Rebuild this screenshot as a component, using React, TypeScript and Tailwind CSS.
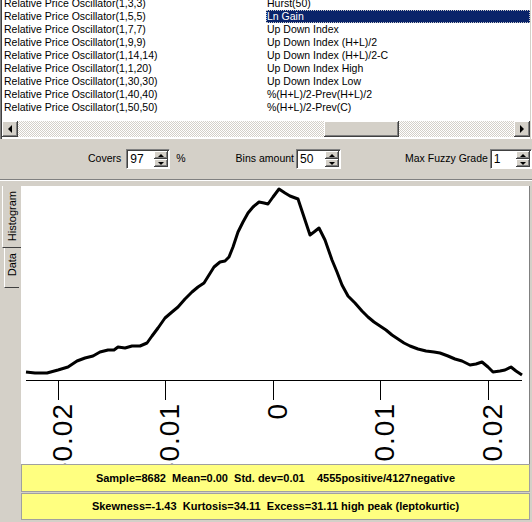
import React from 'react';

const leftItems = [
  'Relative Price Oscillator(1,3,3)',
  'Relative Price Oscillator(1,5,5)',
  'Relative Price Oscillator(1,7,7)',
  'Relative Price Oscillator(1,9,9)',
  'Relative Price Oscillator(1,14,14)',
  'Relative Price Oscillator(1,1,20)',
  'Relative Price Oscillator(1,30,30)',
  'Relative Price Oscillator(1,40,40)',
  'Relative Price Oscillator(1,50,50)',
];

const rightItems = [
  'Hurst(50)',
  'Ln Gain',
  'Up Down Index',
  'Up Down Index (H+L)/2',
  'Up Down Index (H+L)/2-C',
  'Up Down Index High',
  'Up Down Index Low',
  '%(H+L)/2-Prev(H+L)/2',
  '%(H+L)/2-Prev(C)',
];

// histogram outline, page coordinates
const curve = [
  [26, 372], [35, 373], [47, 373], [58, 370], [68, 367], [77, 361], [85, 358], [93, 356],
  [100, 352], [108, 350], [114, 350], [118, 347], [125, 348], [132, 346], [140, 346], [147, 343],
  [152, 336], [158, 328], [165, 318], [172, 312], [178, 307], [185, 299], [192, 292], [198, 287],
  [204, 283], [209, 275], [214, 267], [220, 262], [225, 261], [229, 257], [233, 247], [238, 232],
  [243, 222], [248, 213], [253, 207], [259, 202], [264, 203], [268, 204], [273, 197], [279, 189],
  [285, 193], [290, 196], [298, 199], [304, 217], [310, 235], [314, 232], [319, 228], [325, 240],
  [332, 260], [337, 272], [342, 285], [348, 296], [355, 303], [362, 311], [368, 317], [374, 322],
  [380, 326], [386, 330], [392, 335], [398, 339], [404, 343], [410, 346], [418, 349], [426, 351],
  [434, 352], [440, 353], [448, 356], [455, 359], [462, 361], [470, 365], [476, 364], [482, 362],
  [488, 367], [493, 372], [500, 371], [505, 370], [511, 367], [516, 371], [522, 375],
];

const ticks = [
  { x: 58, label: '-0.02' },
  { x: 165, label: '-0.01' },
  { x: 273, label: '0' },
  { x: 380, label: '0.01' },
  { x: 488, label: '0.02' },
];

function Arrow({ dir }: { dir: 'left' | 'right' | 'up' | 'down' }) {
  const pts = {
    left: '4,0 4,8 0,4',
    right: '0,0 0,8 4,4',
    up: '0,3 6,3 3,0',
    down: '0,0 6,0 3,3',
  }[dir];
  const big = dir === 'left' || dir === 'right';
  return (
    <svg width={big ? 4 : 6} height={big ? 8 : 3} viewBox={big ? '0 0 4 8' : '0 0 6 3'}>
      <polygon points={pts} fill="#000" />
    </svg>
  );
}

function RaisedButton({ children, className }: { children: React.ReactNode; className: string }) {
  return (
    <div
      className={`${className} bg-[#d4d0c8] flex items-center justify-center shadow-[inset_-1px_-1px_0_#404040,inset_1px_1px_0_#ffffff,inset_-2px_-2px_0_#808080]`}
    >
      {children}
    </div>
  );
}

function Spin({ value, width }: { value: string; width: string }) {
  return (
    <div className={`${width} h-[20px] flex bg-white border border-[#808080] border-b-white border-r-white shadow-[inset_1px_1px_0_#404040]`}>
      <span className="flex-1 pl-[3px] pt-[2px] text-[12px] leading-[14px] text-black">{value}</span>
      <div className="w-[15px] flex flex-col py-[1px] pr-[1px]">
        <RaisedButton className="flex-1">
          <Arrow dir="up" />
        </RaisedButton>
        <RaisedButton className="flex-1">
          <Arrow dir="down" />
        </RaisedButton>
      </div>
    </div>
  );
}

export default function App() {
  return (
    <div className="w-[532px] h-[522px] overflow-hidden bg-[#d4d0c8] font-['Liberation_Sans',Arial,sans-serif] text-black">
      {/* list box */}
      <div className="h-[139px] flex flex-col bg-white pl-[2px] pr-[2px] shadow-[inset_1px_0_0_#808080,inset_2px_0_0_#404040,inset_-1px_0_0_#ffffff,inset_-2px_0_0_#d4d0c8]">
        <div className="h-[121px] overflow-hidden">
          <div className="-mt-[3px] grid grid-cols-[264px_1fr] text-[10.5px] leading-[13px]">
            <div className="flex flex-col">
              {leftItems.map((t) => (
                <div key={t} className="h-[13px] pl-[2px] whitespace-nowrap">
                  {t}
                </div>
              ))}
            </div>
            <div className="flex flex-col">
              {rightItems.map((t) => (
                <div
                  key={t}
                  className={
                    t === 'Ln Gain'
                      ? 'h-[13px] pl-[1px] whitespace-nowrap bg-[#0a246a] text-white outline outline-1 outline-dotted outline-[#c8c8c8] -outline-offset-1'
                      : 'h-[13px] pl-[1px] whitespace-nowrap'
                  }
                >
                  {t}
                </div>
              ))}
            </div>
          </div>
        </div>
        <div className="h-[16px] flex">
          <RaisedButton className="w-[16px] h-[16px]">
            <Arrow dir="left" />
          </RaisedButton>
          <div className="flex-1 flex pl-[306px] bg-[repeating-conic-gradient(#d4d0c8_0_25%,#ffffff_0_50%)] bg-[length:2px_2px]">
            <RaisedButton className="w-[75px] h-[16px]">
              <span />
            </RaisedButton>
          </div>
          <RaisedButton className="w-[16px] h-[16px]">
            <Arrow dir="right" />
          </RaisedButton>
        </div>
        <div className="h-[2px] border-b border-white" />
      </div>

      {/* settings row */}
      <div className="h-[40px] flex items-center text-[10.5px] pl-[88px]">
        <span>Covers</span>
        <div className="ml-[5px]">
          <Spin value="97" width="w-[44px]" />
        </div>
        <span className="ml-[6px]">%</span>
        <span className="ml-[50px]">Bins amount</span>
        <div className="ml-[2px]">
          <Spin value="50" width="w-[45px]" />
        </div>
        <span className="ml-[64px]">Max Fuzzy Grade</span>
        <div className="ml-[2px]">
          <Spin value="1" width="w-[42px]" />
        </div>
      </div>
      <div className="h-[2px] border-t border-[#808080] border-b border-b-white" />
      <div className="h-[5px]" />

      {/* histogram pane */}
      <div className="h-[336px] flex">
        <div className="w-[21px] flex flex-col text-[11px]">
          <div className="ml-[2px] w-[19px] h-[62px] flex items-center justify-center border-l border-white border-b border-b-[#404040]">
            <span className="[writing-mode:vertical-rl] rotate-180">Histogram</span>
          </div>
          <div className="ml-[4px] w-[15px] h-[40px] flex items-start justify-center pt-[5px] border-l border-white border-b border-b-[#404040]">
            <span className="[writing-mode:vertical-rl] rotate-180">Data</span>
          </div>
        </div>
        <div className="flex-1 flex flex-col pr-[2px]">
          <div className="h-[278px] bg-white border-r border-[#808080] overflow-hidden">
            <svg width="508" height="278" viewBox="21 186 508 278">
              <polyline
                points={curve.map((p) => p.join(',')).join(' ')}
                fill="none"
                stroke="#000"
                strokeWidth="3"
                strokeLinejoin="round"
              />
              <line x1="26" y1="380.5" x2="522" y2="380.5" stroke="#000" />
              {ticks.map((t) => (
                <g key={t.label}>
                  <line x1={t.x + 0.5} y1="380" x2={t.x + 0.5} y2="400" stroke="#000" />
                  <text
                    transform={`translate(${t.x + 14},403) rotate(-90)`}
                    textAnchor="end"
                    fontSize="28"
                    letterSpacing="1"
                    fontFamily="Liberation Sans, Arial, sans-serif"
                    fill="#000"
                  >
                    {t.label}
                  </text>
                </g>
              ))}
            </svg>
          </div>
          <div className="h-[28px] flex items-center justify-center bg-[#ffff80] border border-[#a0a0a0] text-[11px] font-bold whitespace-pre">
            Sample=8682  Mean=0.00  Std. dev=0.01    4555positive/4127negative
          </div>
          <div className="h-[1px]" />
          <div className="h-[27px] flex items-center justify-center bg-[#ffff80] border border-[#a0a0a0] text-[11px] font-bold whitespace-pre">
            Skewness=-1.43  Kurtosis=34.11  Excess=31.11 high peak (leptokurtic)
          </div>
        </div>
      </div>
    </div>
  );
}
